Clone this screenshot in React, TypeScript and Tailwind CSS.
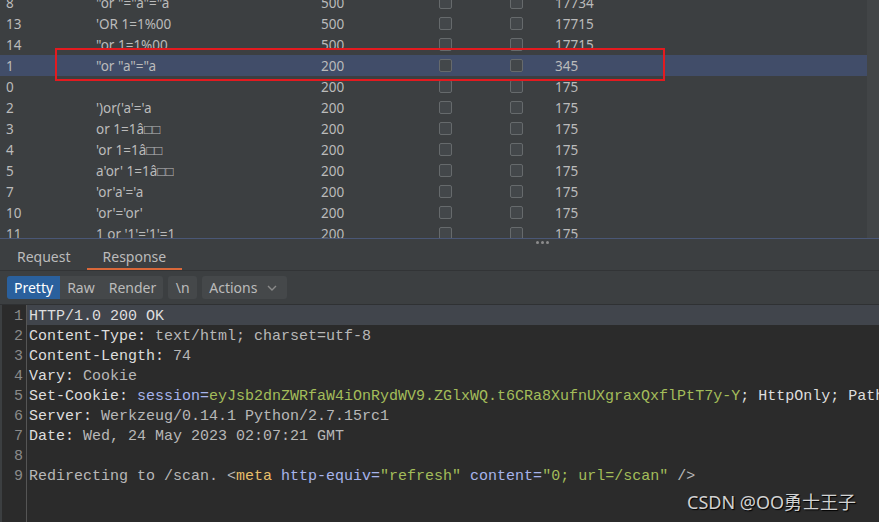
const rows = [
  { id: "8", payload: `"or "="a"="a`, status: "500", len: "17734" },
  { id: "13", payload: "'OR 1=1%00", status: "500", len: "17715" },
  { id: "14", payload: `"or 1=1%00`, status: "500", len: "17715" },
  { id: "1", payload: `"or "a"="a`, status: "200", len: "345", selected: true },
  { id: "0", payload: "", status: "200", len: "175" },
  { id: "2", payload: "')or('a'='a", status: "200", len: "175" },
  { id: "3", payload: "or 1=1â□□", status: "200", len: "175" },
  { id: "4", payload: "'or 1=1â□□", status: "200", len: "175" },
  { id: "5", payload: "a'or' 1=1â□□", status: "200", len: "175" },
  { id: "7", payload: "'or'a'='a", status: "200", len: "175" },
  { id: "10", payload: "'or'='or'", status: "200", len: "175" },
  { id: "11", payload: "1 or '1'='1'=1", status: "200", len: "175" },
];

function Check() {
  return <div className="h-[13px] w-[13px] rounded-[2px] border border-[#666a6c] bg-[#43474a]" />;
}

function Row({ r }: { r: (typeof rows)[number] }) {
  return (
    <div className={`flex h-[21px] items-center pt-[2px] ${r.selected ? "bg-[#414d69]" : ""}`}>
      <span className="w-[96px] shrink-0 pl-[6px]">{r.id}</span>
      <span className="w-[225px] shrink-0 whitespace-pre">{r.payload}</span>
      <span className="w-[118px] shrink-0">{r.status}</span>
      <div className="w-[71px] shrink-0 -mt-[2px]"><Check /></div>
      <div className="w-[45px] shrink-0 -mt-[2px]"><Check /></div>
      <span>{r.len}</span>
    </div>
  );
}

const K = "text-[#dedede]";
const V = "text-[#b8b8b8]";
const A = "text-[#a7b4ec]";
const G = "text-[#a3bd5a]";
const T = "text-[#e8bf6a]";

const lines: React.ReactNode[] = [
  <span className={K}>HTTP/1.0 200 OK</span>,
  <>
    <span className={K}>Content-Type:</span>
    <span className={V}> text/html; charset=utf-8</span>
  </>,
  <>
    <span className={K}>Content-Length:</span>
    <span className={V}> 74</span>
  </>,
  <>
    <span className={K}>Vary:</span>
    <span className={V}> Cookie</span>
  </>,
  <>
    <span className={K}>Set-Cookie: </span>
    <span className={A}>session=</span>
    <span className={G}>eyJsb2dnZWRfaW4iOnRydWV9.ZGlxWQ.t6CRa8XufnUXgraxQxflPtT7y-Y</span>
    <span className={K}>; HttpOnly; Path=/</span>
  </>,
  <>
    <span className={K}>Server:</span>
    <span className={V}> Werkzeug/0.14.1 Python/2.7.15rc1</span>
  </>,
  <>
    <span className={K}>Date:</span>
    <span className={V}> Wed, 24 May 2023 02:07:21 GMT</span>
  </>,
  <span />,
  <>
    <span className={V}>Redirecting to /scan. &lt;</span>
    <span className={T}>meta</span>
    <span className={A}> http-equiv=</span>
    <span className={G}>"refresh"</span>
    <span className={A}> content=</span>
    <span className={G}>"0; url=/scan"</span>
    <span className={V}> /&gt;</span>
  </>,
];

export default function App() {
  return (
    <div className="relative flex h-[522px] w-[879px] flex-col overflow-hidden bg-[#3c3f41] font-['Noto_Sans','Open_Sans',sans-serif] text-[13.5px] text-[#bbbbbb]">
      {/* results table */}
      <div className="relative flex h-[238px] shrink-0 overflow-hidden">
        <div className="-mt-[8px] flex-1">
          {rows.map((r) => (
            <Row key={r.id} r={r} />
          ))}
        </div>
        <div className="w-[12px] shrink-0 bg-[#424547]" />
        <div className="pointer-events-none absolute left-[55px] top-[48px] h-[33px] w-[610px] border-2 border-[#e31a1f]" />
      </div>

      {/* splitter */}
      <div className="flex h-[7px] shrink-0 items-center justify-center border-t border-[#4a5776] pl-[205px]">
        <div className="flex gap-[2px]">
          <div className="h-[3px] w-[3px] rounded-full bg-[#8c8c8c]" />
          <div className="h-[3px] w-[3px] rounded-full bg-[#8c8c8c]" />
          <div className="h-[3px] w-[3px] rounded-full bg-[#8c8c8c]" />
        </div>
      </div>

      {/* tabs */}
      <div className="flex h-[26px] shrink-0 items-stretch border-b border-[#323436] pl-[17px] text-[14px]">
        <div className="flex items-center pb-[2px] pr-[16px]">Request</div>
        <div className="flex items-center border-b-2 border-[#d9683a] px-[16px]">Response</div>
      </div>

      {/* toolbar */}
      <div className="flex h-[34px] shrink-0 items-center gap-[5px] border-b border-[#2f3133] pl-[7px] text-[14px]">
        <div className="flex h-[23px] items-stretch overflow-hidden rounded-[3px] bg-[#45484a]">
          <div className="flex items-center bg-[#2a609d] px-[7px] text-white">Pretty</div>
          <div className="flex items-center px-[7px]">Raw</div>
          <div className="flex items-center px-[7px]">Render</div>
        </div>
        <div className="flex h-[23px] w-[29px] items-center justify-center rounded-[3px] bg-[#45484a]">\n</div>
        <div className="flex h-[23px] w-[85px] items-center gap-[10px] rounded-[3px] bg-[#45484a] pl-[7px]">
          Actions
          <svg width="10" height="6" viewBox="0 0 10 6" fill="none" stroke="#8a8a8a" strokeWidth="1.4">
            <path d="M1 1l4 4 4-4" />
          </svg>
        </div>
      </div>

      {/* editor */}
      <div className="flex flex-1 border-l-2 border-[#3c3f41] bg-[#2b2b2b] font-['Liberation_Mono',monospace] text-[15px] leading-[20px]">
        <div className="w-[25px] shrink-0 border-r border-[#555555] pr-[3px] text-right text-[#8a8a8a]">
          {lines.map((_, i) => (
            <div key={i} className="h-[20px] pt-[2px]">{i + 1}</div>
          ))}
        </div>
        <div className="flex-1 overflow-hidden">
          {lines.map((l, i) => (
            <div key={i} className={`h-[20px] whitespace-pre pl-[2px] pt-[2px] ${i === 0 ? "bg-[#41454c]" : ""}`}>
              {l}
            </div>
          ))}
        </div>
      </div>

      <div className="absolute left-[687px] top-[489px] font-['Noto_Sans','Noto_Sans_CJK_SC',sans-serif] text-[18px] text-[#d2d2d2] [text-shadow:1px_1px_1px_#000]">
        CSDN @OO勇士王子
      </div>
    </div>
  );
}
